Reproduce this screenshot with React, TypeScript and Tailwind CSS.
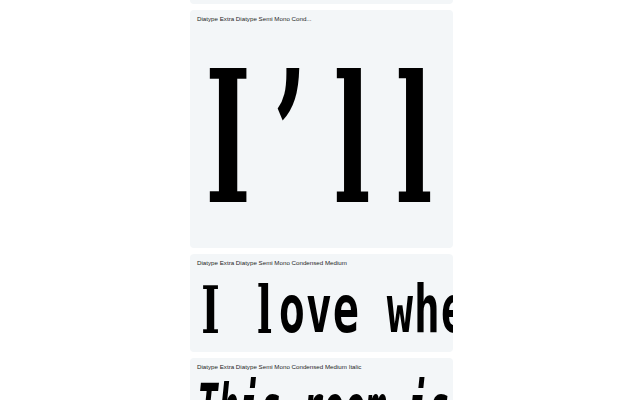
const serif = "font-['DejaVu_Serif','Liberation_Serif',serif]";
const mono = "font-['DejaVu_Sans_Mono','Liberation_Mono',monospace]";

// glyphs with slab serifs in the reference typeface
const slab = new Set(["I", "l", "’"]);

function Label({ children }: { children: string }) {
  return (
    <p className="font-['Liberation_Sans','Inter',sans-serif] text-[6.2px] leading-[9px] text-[#262626] whitespace-nowrap">
      {children}
    </p>
  );
}

export default function App() {
  const big = "I’ll".split("");
  const line = "I love when you".split("");

  return (
    <div className="min-h-[400px] w-full bg-white overflow-hidden">
      <div className="ml-[190px] flex w-[263px] flex-col gap-[6px]">
        {/* previous card, scrolled mostly out of view */}
        <div className="h-[4px] rounded-b-[4px] bg-[#f3f6f8]" />

        <div className="h-[238px] overflow-hidden rounded-[4px] bg-[#f3f6f8] px-[7px] pt-[4px]">
          <Label>Diatype Extra Diatype Semi Mono Cond...</Label>
          <div className={`${serif} mt-[22px] flex h-[184px] text-[184px] font-bold leading-none text-black`}>
            {big.map((c, i) => (
              <span key={i} className="flex w-[62px] shrink-0 justify-center">
                <span
                  className={`inline-block scale-x-[0.53] ${c === "l" ? "origin-[50%_84%] scale-y-[0.96]" : ""}`}
                >
                  {c}
                </span>
              </span>
            ))}
          </div>
        </div>

        <div className="h-[98px] overflow-hidden rounded-[4px] bg-[#f3f6f8] px-[7px] pt-[4px]">
          <Label>Diatype Extra Diatype Semi Mono Condensed Medium</Label>
          <div className="mt-[10px] flex h-[66px] text-[66px] font-bold leading-none text-black">
            {line.map((c, i) => (
              <span key={i} className="flex w-[27px] shrink-0 justify-center">
                <span className={`inline-block ${slab.has(c) ? `${serif} scale-x-[0.6]` : `${mono} scale-x-[0.66]`}`}>
                  {c === " " ? "\u00a0" : c}
                </span>
              </span>
            ))}
          </div>
        </div>

        <div className="h-[80px] overflow-hidden rounded-[4px] bg-[#f3f6f8] px-[7px] pt-[4px]">
          <Label>Diatype Extra Diatype Semi Mono Condensed Medium Italic</Label>
          <div className={`${mono} mt-[5px] whitespace-nowrap text-[66px] font-bold italic leading-none text-black`}>
            <span className="inline-block origin-left scale-x-[0.53]">This room is dark</span>
          </div>
        </div>
      </div>
    </div>
  );
}
